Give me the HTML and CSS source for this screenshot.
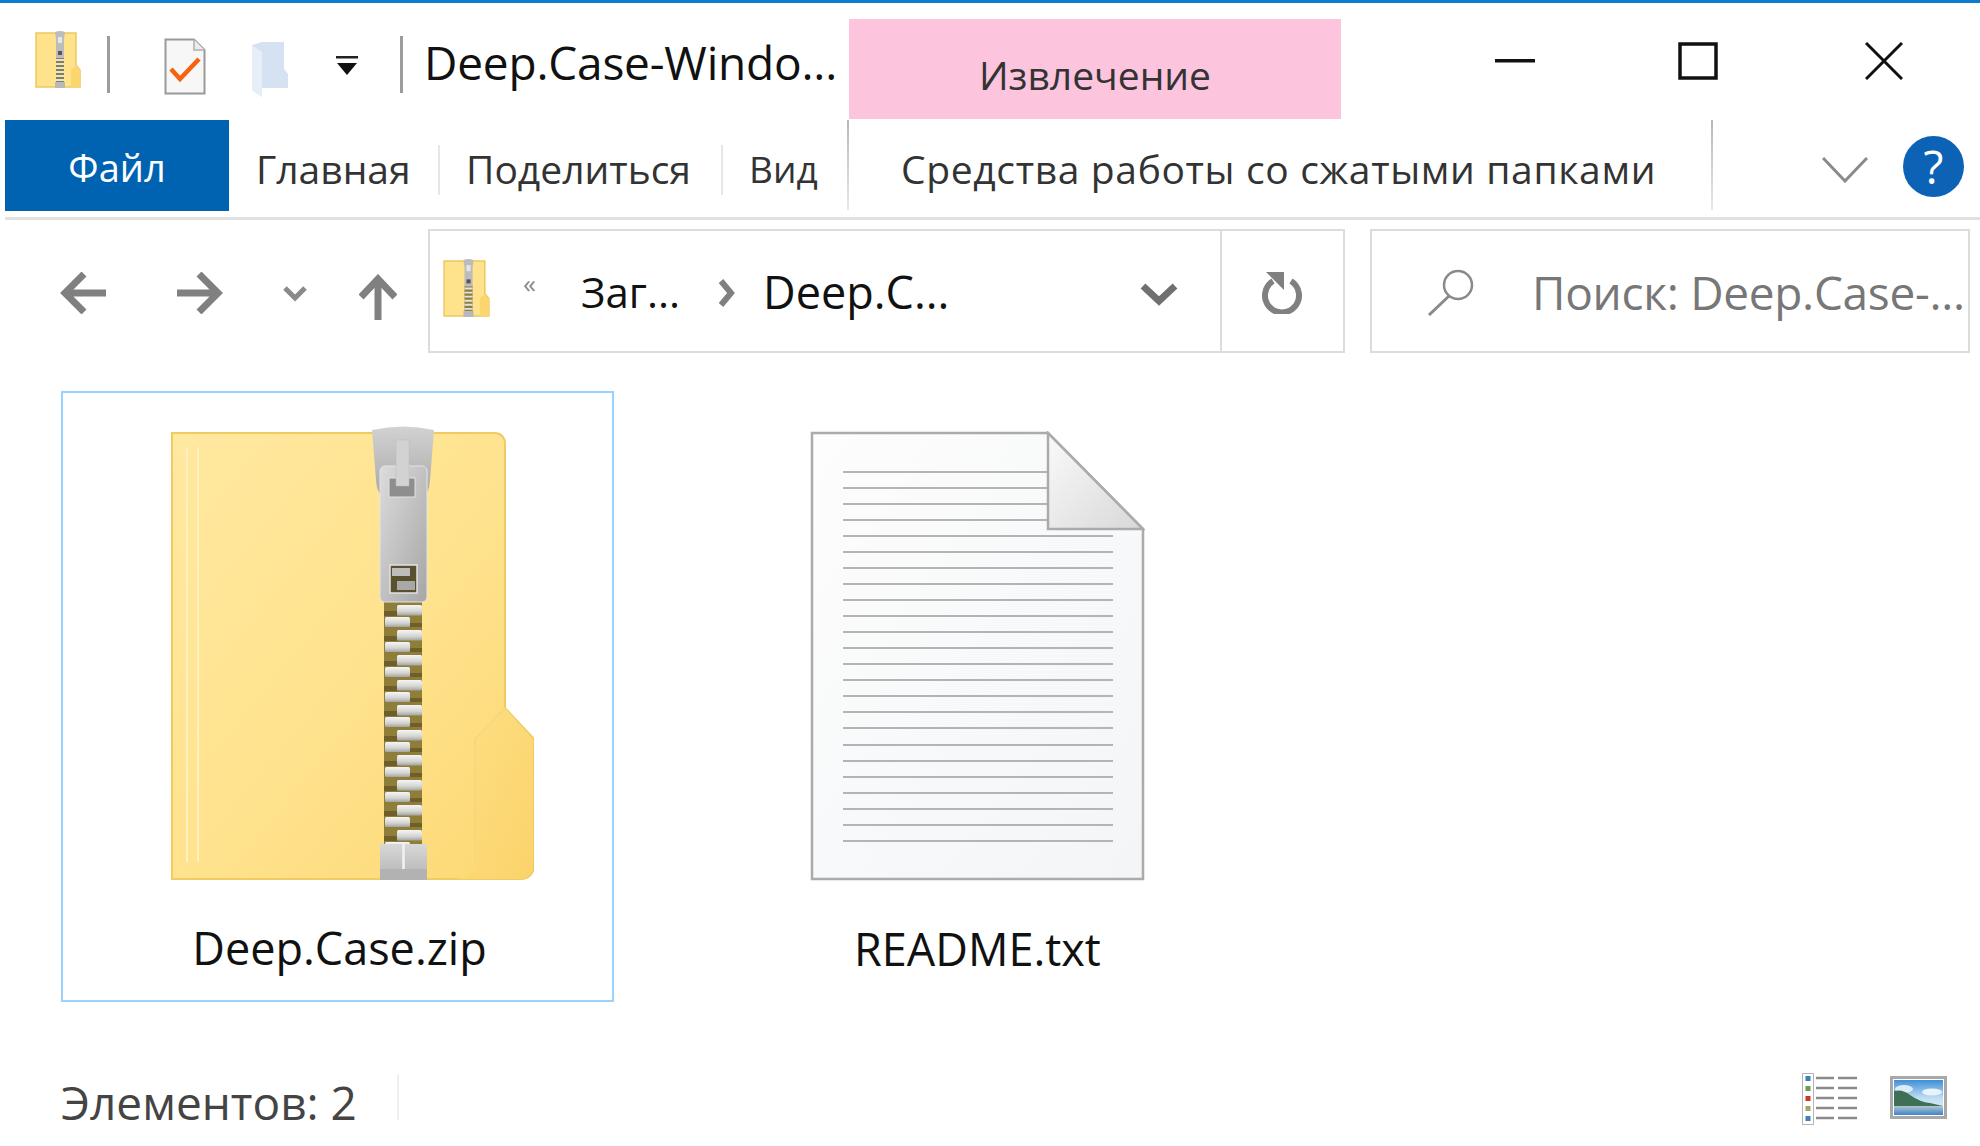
FILE: index.html
```html
<!DOCTYPE html>
<html lang="ru">
<head>
<meta charset="utf-8">
<title>Deep.Case-Windows</title>
<link rel="stylesheet" href="styles.css">
</head>
<body>
<svg class="defs" aria-hidden="true">
  <defs>
    <linearGradient id="gFolder" x1="0" y1="0" x2="1" y2="1">
      <stop offset="0" stop-color="#ffe8a0"/><stop offset="0.55" stop-color="#ffe28c"/><stop offset="1" stop-color="#fcd873"/>
    </linearGradient>
    <linearGradient id="gPocket" x1="0" y1="0" x2="1" y2="1">
      <stop offset="0" stop-color="#fedf84"/><stop offset="1" stop-color="#fbd36a"/>
    </linearGradient>
    <linearGradient id="gSlider" x1="0" y1="0" x2="1" y2="1">
      <stop offset="0" stop-color="#dcdcdc"/><stop offset="1" stop-color="#a6a6a6"/>
    </linearGradient>
    <linearGradient id="gCap" x1="0" y1="0" x2="0" y2="1">
      <stop offset="0" stop-color="#d2d2d2"/><stop offset="1" stop-color="#a8a8a8"/>
    </linearGradient>
    <linearGradient id="gTooth" x1="0" y1="0" x2="0" y2="1">
      <stop offset="0" stop-color="#f6f6f6"/><stop offset="0.6" stop-color="#d4d4d2"/><stop offset="1" stop-color="#a4a4a0"/>
    </linearGradient>
    <linearGradient id="gStop" x1="0" y1="0" x2="0" y2="1">
      <stop offset="0" stop-color="#d8d8d8"/><stop offset="1" stop-color="#bdbdbd"/>
    </linearGradient>
    <linearGradient id="gPage" x1="0" y1="0" x2="1" y2="1">
      <stop offset="0" stop-color="#fdfdfd"/><stop offset="1" stop-color="#f3f5f7"/>
    </linearGradient>
    <linearGradient id="gFold" x1="0" y1="0" x2="1" y2="1">
      <stop offset="0" stop-color="#fafafa"/><stop offset="1" stop-color="#d8d8d8"/>
    </linearGradient>
    <linearGradient id="gSky" x1="0" y1="0" x2="0" y2="1">
      <stop offset="0" stop-color="#3f8fd8"/><stop offset="0.5" stop-color="#bcdcf2"/><stop offset="1" stop-color="#eef6fb"/>
    </linearGradient>
    <linearGradient id="gLake" x1="0" y1="0" x2="0" y2="1">
      <stop offset="0" stop-color="#b4c6d0"/><stop offset="1" stop-color="#3b83c9"/>
    </linearGradient>
    <pattern id="pTeeth" patternUnits="userSpaceOnUse" x="384" y="602" width="38" height="25">
      <rect width="38" height="25" fill="#8f7d3a"/>
      <rect x="0" y="9" width="13" height="5" fill="#6e5f2a"/>
      <rect x="26" y="21" width="12" height="4" fill="#6e5f2a"/>
      <rect x="13" y="3" width="25" height="10.500" rx="1.500" fill="url(#gTooth)"/>
      <rect x="1" y="15" width="25" height="10" rx="1.500" fill="url(#gTooth)"/>
    </pattern>
    <symbol id="zipFolder" viewBox="171 426 363 454">
      <path d="M172 433H495a10 10 0 0 1 10 10V708L534 739V866a13 13 0 0 1-13 13H172Z" fill="url(#gFolder)" stroke="#efcb62" stroke-width="2"/>
      <path d="M187 447V862M198 447V862" stroke="#fff0c2" stroke-width="2" fill="none"/>
      <path d="M455 879a20 20 0 0 0 20-16V739L505 708L533 739V866a13 13 0 0 1-13 13Z" fill="url(#gPocket)"/>
      <path d="M475 863V739L505 708" stroke="#f7d77e" stroke-width="2" fill="none"/>
      <rect x="384" y="600" width="38" height="246" fill="url(#pTeeth)"/>
      <path d="M372 430Q403 423 434 430L430 480Q429 496 420 497H386Q377 496 376 480Z" fill="url(#gCap)"/>
      <rect x="380" y="466" width="47" height="136" rx="5" fill="url(#gSlider)" stroke="#e4e4e4" stroke-width="1"/>
      <rect x="389" y="478" width="26" height="19" fill="#8e8e8e" stroke="#e2e2e2" stroke-width="1"/>
      <rect x="396" y="440" width="13" height="46" fill="#d2d2d2" stroke="#bcbcbc" stroke-width=".5"/>
      <rect x="390" y="565" width="27" height="28" fill="#5a5030" stroke="#e2e2e2" stroke-width="1.500"/>
      <rect x="392" y="568" width="18" height="8" fill="#bdbdbd"/>
      <rect x="397" y="581" width="18" height="9" fill="#a8a8a8"/>
      <rect x="380" y="844" width="47" height="26" fill="url(#gStop)"/>
      <rect x="380" y="869" width="47" height="11" fill="#b2b2b2"/>
      <path d="M403.500 844V869" stroke="#f2f2f2" stroke-width="2.500"/>
    </symbol>
    <symbol id="zipSmall" viewBox="0 0 46 57">
      <path d="M1 2H41V34L45 39V56H1Z" fill="#ffe28c" stroke="#eec75c" stroke-width="1.500"/>
      <path d="M36 56V39L41 34L45 39V56Z" fill="#fbd56e"/>
      <rect x="21" y="26" width="8" height="26" fill="#8f7d3a"/>
      <path d="M21 29H29M21 33H29M21 37H29M21 41H29M21 45H29M21 49H29" stroke="#e2e2e2" stroke-width="1.800"/>
      <path d="M20 1Q25 -1 30 1L29 8V27H21V8Z" fill="#bcbcbc"/>
      <rect x="23" y="6" width="4" height="6" fill="#e6e6e6"/>
      <rect x="23" y="20" width="4" height="4" fill="#555"/>
      <rect x="20" y="51" width="10" height="6" fill="#b8b8b8"/>
    </symbol>
  </defs>
</svg>

<div class="window">
  <div class="accent"></div>

  <header class="titlebar">
    <svg class="qa-zip" width="46" height="57"><use href="#zipSmall"/></svg>
    <span class="qa-sep qa-sep-a"></span>
    <svg class="qa-doc" width="42" height="57" viewBox="0 0 42 57">
      <path d="M1.500 1.500H30L40.500 12V55.500H1.500Z" fill="#f7f7f7" stroke="#9a9a9a" stroke-width="2"/>
      <path d="M30 1.500V12H40.500" fill="#ececec" stroke="#b0b0b0" stroke-width="1.500"/>
      <path d="M7 31L16 41L35 21" fill="none" stroke="#f7630c" stroke-width="4.500"/>
    </svg>
    <svg class="qa-folder" width="36" height="55" viewBox="0 0 36 55">
      <path d="M0 3L10 0H32V27L36 32V46H10V55L0 48Z" fill="#d6e2f1"/>
      <path d="M0 3L10 10V55L0 48Z" fill="#e6eef8"/>
    </svg>
    <svg class="qa-drop" width="22" height="19" viewBox="0 0 22 19">
      <rect width="22" height="2.500" y="0" fill="#222"/>
      <path d="M1 7H21L11 19Z" fill="#111"/>
    </svg>
    <span class="qa-sep qa-sep-b"></span>
    <span class="title-text">Deep.Case-Windo...</span>
    <div class="context-tab">Извлечение</div>
    <svg class="win-btn win-min" width="40" height="4" viewBox="0 0 40 4"><rect width="40" height="3.500" fill="#111"/></svg>
    <svg class="win-btn win-max" width="40" height="38" viewBox="0 0 40 38"><rect x="2" y="2" width="36" height="34" fill="none" stroke="#111" stroke-width="3.500"/></svg>
    <svg class="win-btn win-close" width="38" height="38" viewBox="0 0 38 38"><path d="M1 1L37 37M37 1L1 37" fill="none" stroke="#111" stroke-width="3"/></svg>
  </header>

  <nav class="ribbon">
    <div class="file-tab">Файл</div>
    <div class="tab tab-home">Главная</div>
    <span class="rib-sep"></span>
    <div class="tab tab-share">Поделиться</div>
    <span class="rib-sep"></span>
    <div class="tab tab-view">Вид</div>
    <span class="rib-sep rib-sep-tall"></span>
    <div class="tab tab-tools">Средства работы со сжатыми папками</div>
    <span class="rib-sep rib-sep-tall rib-sep-end"></span>
    <svg class="rib-chev" width="46" height="26" viewBox="0 0 46 26"><path d="M1 1L23 24L45 1" fill="none" stroke="#8a8a8a" stroke-width="3"/></svg>
    <div class="help">?</div>
  </nav>

  <div class="navbar">
    <svg class="nav-back" width="46" height="42" viewBox="0 0 46 42"><path d="M46 21H6M24 2L5 21L24 40" fill="none" stroke="#808080" stroke-width="7"/></svg>
    <svg class="nav-fwd" width="46" height="42" viewBox="0 0 46 42"><path d="M0 21H40M22 2L41 21L22 40" fill="none" stroke="#808080" stroke-width="7"/></svg>
    <svg class="nav-recent" width="24" height="17" viewBox="0 0 24 17"><path d="M2 3L12 13L22 3" fill="none" stroke="#8a8a8a" stroke-width="5"/></svg>
    <svg class="nav-up" width="38" height="46" viewBox="0 0 38 46"><path d="M19 46V6M2 23L19 5L36 23" fill="none" stroke="#808080" stroke-width="7"/></svg>
    <div class="address">
      <svg class="addr-icon" width="47" height="58"><use href="#zipSmall"/></svg>
      <span class="addr-more">«</span>
      <span class="crumb crumb-a">Заг...</span>
      <svg class="crumb-sep" width="19" height="30" viewBox="0 0 19 30"><path d="M4 3L14 15L4 27" fill="none" stroke="#808080" stroke-width="6"/></svg>
      <span class="crumb crumb-b">Deep.C...</span>
      <svg class="addr-drop" width="38" height="24" viewBox="0 0 38 24"><path d="M3 4L19 19L35 4" fill="none" stroke="#707070" stroke-width="7"/></svg>
      <div class="refresh">
        <svg width="42" height="44" viewBox="0 0 42 44"><path d="M13 11A17 17 0 1 0 31 11" fill="none" stroke="#808080" stroke-width="6"/><path d="M6 2H24V20Z" fill="#808080"/></svg>
      </div>
    </div>
    <div class="search">
      <svg class="search-icon" width="50" height="48" viewBox="0 0 50 48"><circle cx="31" cy="17" r="14" fill="none" stroke="#8a8a8a" stroke-width="2.500"/><path d="M22 28L2 47" stroke="#8a8a8a" stroke-width="3"/></svg>
      <span class="search-text">Поиск: Deep.Case-...</span>
    </div>
  </div>

  <main class="files">
    <div class="file file-selected">
      <svg class="big-zip" width="363" height="454"><use href="#zipFolder"/></svg>
      <span class="file-name">Deep.Case.zip</span>
    </div>
    <div class="file">
      <svg class="big-doc" width="335" height="450" viewBox="810 431 335 450">
        <path d="M812 433H1048L1143 529V879H812Z" fill="url(#gPage)" stroke="#ababab" stroke-width="2.500"/>
        <g stroke="#b4b4b4" stroke-width="2">
          <path d="M843 472H1048M843 488H1048M843 504H1048M843 520H1048"/>
          <path d="M843 536H1113M843 552H1113M843 568H1113M843 584H1113M843 600H1113M843 616H1113M843 632H1113M843 648H1113M843 664H1113M843 680H1113M843 696H1113M843 712H1113M843 728H1113M843 745H1113M843 761H1113M843 777H1113M843 793H1113M843 809H1113M843 825H1113M843 841H1113"/>
        </g>
        <path d="M1048 433L1143 529H1048Z" fill="url(#gFold)" stroke="#ababab" stroke-width="2.500"/>
      </svg>
      <span class="file-name">README.txt</span>
    </div>
  </main>

  <footer class="status">
    <span class="status-text">Элементов: 2</span>
    <span class="status-sep"></span>
    <svg class="view-details" width="55" height="52" viewBox="0 0 55 52">
      <rect x="0.500" y="0.500" width="11" height="51" fill="#fff" stroke="#b5b5b5"/>
      <rect x="3.500" y="3" width="5" height="5" fill="#3a7fb5"/>
      <rect x="3.500" y="13" width="5" height="5" fill="#6f9a4a"/>
      <rect x="3.500" y="23" width="5" height="5" fill="#c23a2a"/>
      <rect x="3.500" y="33" width="5" height="5" fill="#9aa86a"/>
      <rect x="3.500" y="43" width="5" height="5" fill="#3a7fb5"/>
      <g stroke="#8a8a8a" stroke-width="2.500">
        <path d="M14 5H32M36 5H55M14 15H32M36 15H55M14 25H32M36 25H55M14 35H32M36 35H55M14 45H32M36 45H55"/>
      </g>
    </svg>
    <svg class="view-thumb" width="57" height="43" viewBox="0 0 57 43">
      <rect x="1.500" y="1.500" width="54" height="40" fill="#fff" stroke="#a8a8a8" stroke-width="3"/>
      <rect x="4" y="4" width="49" height="35" fill="url(#gSky)"/>
      <ellipse cx="14" cy="13" rx="9" ry="4" fill="#dcecf5"/>
      <ellipse cx="42" cy="16" rx="10" ry="3.500" fill="#e8f3f9"/>
      <path d="M4 15Q13 13 20 19Q30 26 40 27L53 30V32H4Z" fill="#3f6f55"/>
      <rect x="4" y="30" width="49" height="9" fill="url(#gLake)"/>
    </svg>
  </footer>
</div>
</body>
</html>
```

FILE: styles.css
```css
* { box-sizing: border-box; }
html, body { margin: 0; padding: 0; background: #fff; }
body { font-family: "Open Sans", "Noto Sans", sans-serif; color: #111; overflow: hidden; }
.defs { position: absolute; width: 0; height: 0; }
svg { display: block; flex: none; }

.window { width: 1980px; height: 1146px; display: flex; flex-direction: column; }
.accent { height: 3px; background: #0a7cc9; flex: none; }

/* title bar */
.titlebar { height: 117px; flex: none; display: flex; align-items: flex-start; padding-left: 35px; }
.qa-zip { margin: 28px 0 0 0; }
.qa-sep { width: 3px; height: 57px; background: #9c9c9c; margin-top: 33px; flex: none; }
.qa-sep-a { margin-left: 26px; }
.qa-sep-b { margin-left: 42px; }
.qa-doc { margin: 35px 0 0 54px; }
.qa-folder { margin: 39px 0 0 46px; }
.qa-drop { margin: 53px 0 0 48px; }
.title-text { margin: 33px 0 0 21px; width: 425px; font-size: 46px; line-height: 52px; white-space: nowrap; letter-spacing: -0.2px; color: #111; flex: none; }
.context-tab { width: 492px; height: 100px; margin-top: 16px; background: #fcc5dd; color: #333; font-size: 39px; text-align: center; line-height: 50px; padding-top: 31px; flex: none; }
.win-btn { margin-top: 39px; }
.win-min { margin: 56px 0 0 154px; }
.win-max { margin-left: 143px; }
.win-close { margin-left: 147px; }

/* ribbon */
.ribbon { height: 100px; flex: none; display: flex; align-items: flex-start; margin-left: 5px; border-bottom: 3px solid #e1e1e1; }
.file-tab { width: 224px; height: 91px; background: #0063b1; color: #fff; font-size: 38px; text-align: center; line-height: 95px; flex: none; }
.tab { font-size: 39px; line-height: 50px; margin-top: 24px; color: #333; white-space: nowrap; flex: none; }
.tab-home { margin-left: 27px; width: 182px; }
.tab-share { margin-left: 26px; width: 255px; }
.tab-view { margin-left: 26px; width: 98px; font-size: 37px; }
.tab-tools { margin-left: 52px; width: 810px; letter-spacing: 0.65px; }
.rib-sep { width: 2px; height: 50px; background: #e6e6e6; margin-top: 25px; flex: none; }
.rib-sep-tall { height: 90px; margin-top: 0; background: linear-gradient(#b8b8b8, #e8e8e8); }
.rib-chev { margin: 37px 0 0 109px; }
.help { width: 61px; height: 61px; border-radius: 50%; background: #0c63b6; color: #fff; font-size: 46px; line-height: 60px; text-align: center; margin: 16px 0 0 35px; flex: none; }

/* nav */
.navbar { height: 137px; flex: none; display: flex; align-items: flex-start; padding: 9px 0 0 60px; }
.nav-back { margin-top: 43px; }
.nav-fwd { margin: 43px 0 0 71px; }
.nav-recent { margin: 56px 0 0 60px; }
.nav-up { margin: 45px 0 0 52px; }
.address { width: 917px; height: 124px; margin-left: 31px; border: 2px solid #dcdcdc; display: flex; align-items: flex-start; padding-left: 13px; flex: none; }
.addr-icon { margin-top: 28px; }
.addr-more { margin: 37px 0 0 33px; width: 24px; font-size: 26px; line-height: 30px; color: #8a8a8a; flex: none; }
.crumb { font-size: 45px; line-height: 52px; margin-top: 35px; white-space: nowrap; color: #111; flex: none; }
.crumb-a { margin-left: 34px; width: 110px; font-size: 42px; }
.crumb-sep { margin: 47px 0 0 26px; }
.crumb-b { margin-left: 27px; width: 190px; }
.addr-drop { margin: 51px 0 0 187px; }
.refresh { width: 117px; height: 120px; margin-left: 42px; border-left: 2px solid #dcdcdc; padding: 39px 0 0 38px; flex: none; }
.search { width: 600px; height: 124px; margin-left: 25px; border: 2px solid #dcdcdc; display: flex; align-items: flex-start; padding-left: 55px; flex: none; }
.search-icon { margin-top: 37px; }
.search-text { margin: 35px 0 0 55px; font-size: 46px; line-height: 52px; color: #777; white-space: nowrap; letter-spacing: -0.3px; flex: none; }

/* files */
.files { display: flex; flex: none; gap: 87px; padding: 34px 0 0 61px; }
.file { width: 553px; height: 611px; display: flex; flex-direction: column; align-items: center; flex: none; padding-top: 39px; border: 2px solid transparent; }
.file-selected { border-color: #99d1ff; padding-top: 33px; }
.file-selected .file-name { margin-left: 4px; }
.big-zip { align-self: flex-start; margin-left: 108px; }
.big-doc { margin-top: -1px; }
.file-name { margin-top: 40px; font-size: 45px; line-height: 56px; color: #111; white-space: nowrap; }

/* status */
.status { flex: 1; display: flex; align-items: flex-start; padding-left: 61px; }
.status-text { margin-top: 74px; width: 336px; font-size: 46px; line-height: 52px; color: #444; white-space: nowrap; flex: none; }
.status-sep { width: 2px; height: 46px; margin-top: 72px; background: #f0f0f0; flex: none; }
.view-details { margin: 71px 0 0 1403px; }
.view-thumb { margin: 74px 0 0 33px; }
```
